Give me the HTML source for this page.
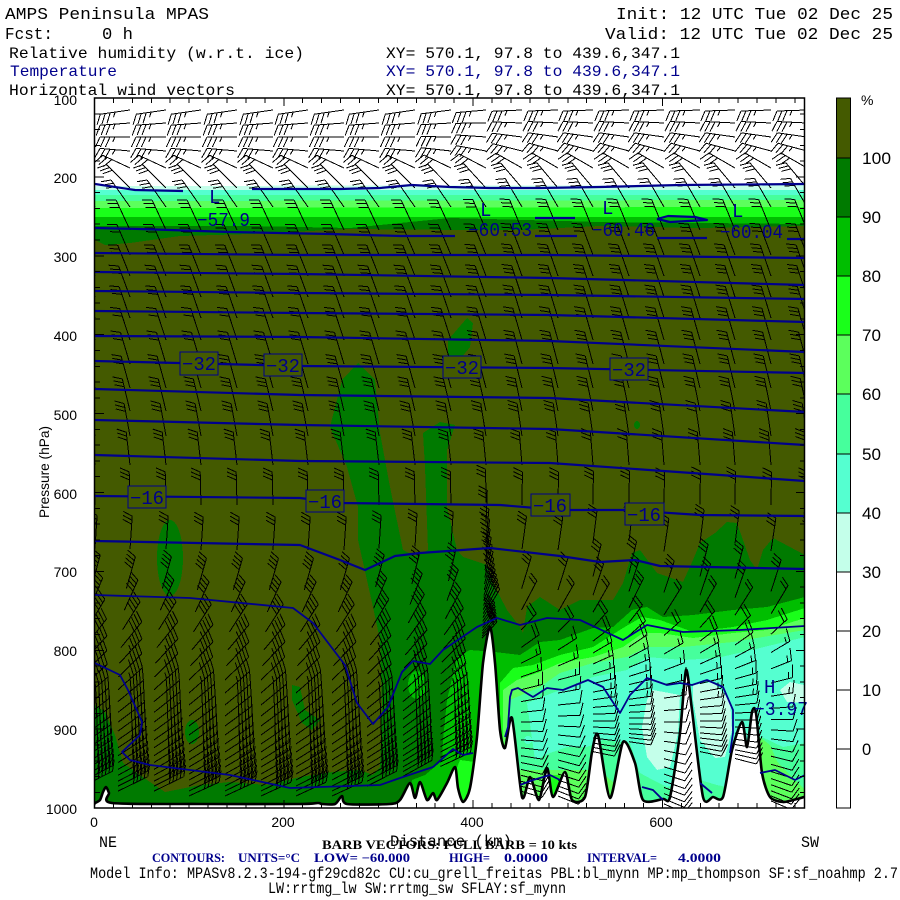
<!DOCTYPE html>
<html lang="en">
<head>
<meta charset="utf-8">
<title>AMPS Peninsula MPAS</title>
<style>
html,body{margin:0;padding:0;background:#fff;width:900px;height:900px;overflow:hidden}
svg{display:block}
text{font-family:"Liberation Sans",sans-serif;fill:#000}
.b{fill:#00008c}
.t1{font-family:"Liberation Mono",monospace;font-size:17px}
.t2{font-family:"Liberation Mono",monospace;font-size:16px}
.ax{font-size:14px}
.cb{font-size:16.5px}
.s{font-family:"Liberation Serif",serif;font-weight:bold;font-size:12.5px}
.c{fill:none;stroke:#00008c;stroke-width:2.2;stroke-linejoin:round}
.c1{fill:none;stroke:#00008c;stroke-width:1.8;stroke-linejoin:round}
.lb{fill:#445a00;stroke:#00008c;stroke-width:1.2}
.ll{font-family:"Liberation Mono",monospace;font-size:19px;fill:#00008c}
.ol{fill:#445a00}.dk{fill:#007a00}.md{fill:#00be00}.br{fill:#1aff1a}.li{fill:#5cff5c}.mi{fill:#46ff9c}.aq{fill:#55ffd0}.pa{fill:#c4ffea}
</style>
</head>
<body>
<svg id="s" xmlns="http://www.w3.org/2000/svg" width="900" height="900" viewBox="0 0 900 900">
<defs><clipPath id="pc"><rect x="95" y="98" width="710" height="710"/></clipPath></defs>
<rect width="900" height="900" fill="#fff"/>
<g clip-path="url(#pc)" shape-rendering="crispEdges">
<rect x="95" y="98" width="710" height="710" class="ol"/>
<!-- upper moisture band -->
<polygon fill="#fff" points="95,98 805,98 805,186 95,186"/>
<polygon class="dk" points="95,186 805,186 805,226 700,228 600,226 520,230 460,230 350,229 250,234 180,236 130,243 105,245 95,240"/>
<polygon class="md" points="95,186 805,186 805,224 600,222 450,218 350,228 250,226 150,226 95,226"/>
<polygon class="br" points="95,186 805,186 805,217 95,217"/>
<polygon class="li" points="95,186 805,186 805,207 95,208"/>
<polygon class="mi" points="95,186 805,186 805,200 95,201"/>
<polygon class="aq" points="95,186 805,186 805,195 95,195"/>
<polygon class="pa" points="95,186 805,185 805,190 95,190"/>
<!-- small patches -->
<polygon class="dk" points="448,340 467,318 473,323 470,347 457,363 448,357"/>
<ellipse class="dk" cx="170" cy="558" rx="13" ry="38"/>
<ellipse class="dk" cx="192" cy="732" rx="7" ry="12"/>
<ellipse class="dk" cx="637" cy="425" rx="3" ry="4"/>
<polygon class="dk" points="292,685 300,687 305,710 320,720 312,730 302,723 292,700"/>
<!-- lower dark region -->
<polygon class="dk" points="95,808 95,705 105,712 115,735 120,753 123,763 150,782 165,792 200,785 230,782 267,785 300,777 333,772 360,770 373,775 380,767 382,707 380,640 373,607 358,540 358,507 347,467 330,427 342,380 358,363 375,380 380,433 390,487 403,550 415,556 428,550 425,467 423,433 440,422 455,425 447,450 447,507 457,550 463,557 487,565 493,583 507,610 520,627 523,633 527,607 540,597 560,610 580,600 613,600 623,583 632,553 640,550 657,573 683,582 693,560 700,543 715,533 727,522 737,523 750,560 757,570 763,550 773,538 805,555 805,808"/>
<ellipse class="md" cx="417" cy="685" rx="9" ry="14"/>
<polygon class="md" points="408,808 412,780 425,775 443,760 443,808"/>
<polygon class="md" points="440,808 443,740 447,700 457,657 470,650 495,652 520,655 540,642 560,640 593,628 613,627 632,610 647,607 663,617 693,615 733,610 767,607 805,597 805,808"/>
<polygon class="br" points="456,808 456,770 460,760 475,762 475,808"/>
<polygon class="br" points="500,808 500,683 513,668 533,665 560,655 593,647 623,628 642,617 660,620 693,632 733,627 767,620 805,608 805,808"/>
<polygon class="li" points="503,808 503,690 517,680 540,672 560,663 593,657 623,647 643,633 660,633 693,638 733,633 767,630 805,618 805,808"/>
<polygon class="mi" points="510,808 510,700 517,697 540,687 560,673 593,663 627,657 647,647 683,647 733,642 805,630 805,790 785,770 762,745 757,808 700,808 640,808 600,770 560,770 530,770 510,770"/>
<polygon class="aq" points="535,760 527,703 560,690 593,677 627,670 647,657 683,660 717,658 760,648 805,637 805,743 783,747 762,737 740,790 717,785 700,780 667,787 653,780 640,773 630,743 603,740 587,747 567,747 550,753"/>
<circle class="aq" cx="528" cy="740" r="4"/>
<polygon class="li" points="757,808 757,735 770,745 783,775 804,790 804,808"/>
<polygon class="br" points="545,808 545,775 560,775 565,808"/>
<polygon class="pa" points="653,690 680,695 678,733 670,767 657,770 647,757 642,727 647,700"/>
<polygon class="pa" points="693,685 713,682 730,700 732,730 725,757 715,758 700,740 693,700"/>
<polygon class="pa" points="780,690 790,682 804,685 804,703 787,702"/>
<!-- terrain -->
<path id="terr" fill="#fff" stroke="#000" stroke-width="2.6" shape-rendering="auto" stroke-linejoin="round"/>
<path id="barbs" fill="none" stroke="#000" stroke-width="1"/>
<!-- contours -->
<g shape-rendering="auto">
<polyline class="c" points="95,184 135,190 183,191"/>
<polyline class="c" points="252,189 340,189 380,188 412,185 450,187 490,188 540,188 600,187 680,185 805,184"/>
<polyline class="c" points="95,228 140,229 230,232 330,234 400,236 455,236"/>
<polyline class="c" points="535,218 575,218"/><polyline class="c" points="535,236 577,236"/>
<polyline class="c" points="657,219 668,216 695,217 707,220 670,222 657,219"/><polyline class="c" points="657,238 707,238"/><polyline class="c" points="787,239 805,239"/>
<polyline class="c" points="95,253 300,255 550,255 805,258"/>
<polyline class="c" points="95,272 300,274 550,278 805,285"/>
<polyline class="c" points="95,291 300,293 550,295 805,299"/>
<polyline class="c" points="95,311 300,313 550,315 805,322"/>
<polyline class="c" points="95,336 300,337 550,341 805,352"/>
<polyline class="c" points="95,361 300,366 550,368 805,373"/>
<polyline class="c" points="95,389 300,395 550,398 805,412"/>
<polyline class="c" points="95,420 300,425 550,429 805,445"/>
<polyline class="c" points="95,455 300,461 550,463 805,481"/>
<polyline class="c" points="95,496 300,498 340,503 500,505 560,510 625,510 700,515 805,516"/>
<polyline class="c" points="95,541 300,545 340,560 365,570 395,556 420,553 490,548 560,556 600,562 635,560 660,566 805,569"/>
<polyline class="c1" points="95,595 190,598 293,608 313,623 345,665 357,703 373,724 388,707 402,672 413,661 430,664 443,650 477,627 497,618 520,625 547,618 580,620 623,640 647,625 683,632 740,630 805,626"/>
<polyline class="c1" points="95,663 120,675 128,690 142,722 140,735 122,752 130,760 150,765 190,770 230,775 290,788 380,785 400,778 433,767 453,749 463,755 473,753"/>
<polyline class="c1" points="505,737 508,727 510,697 512,690 518,688 533,697 547,688 563,690 588,680 603,687 620,713 630,695 647,678 667,685 680,683 692,685 707,680 723,687 733,710 733,733 730,753"/>
<polyline class="c1" points="520,785 533,780 550,775 560,780"/>
<polyline class="c1" points="642,787 653,790 663,800"/>
<polyline class="c1" points="700,783 712,793"/>
<polyline class="c1" points="760,773 775,770 795,780 805,775"/>
</g>
<!-- contour label boxes -->
<g>
<rect class="lb" x="180" y="352" width="38" height="23"/><rect class="lb" x="264" y="354" width="38" height="22"/>
<rect class="lb" x="443" y="356" width="38" height="22"/><rect class="lb" x="610" y="358" width="38" height="22"/>
<rect class="lb" x="128" y="486" width="38" height="22"/><rect class="lb" x="306" y="490" width="38" height="22"/>
<rect class="lb" x="531" y="494" width="39" height="22"/><rect class="lb" x="625" y="503" width="39" height="22"/>
</g>
</g>
<g>
<text class="ll" x="182" y="370" textLength="34">−32</text><text class="ll" x="266" y="372" textLength="34">−32</text>
<text class="ll" x="445" y="374" textLength="34">−32</text><text class="ll" x="612" y="376" textLength="34">−32</text>
<text class="ll" x="130" y="504" textLength="34">−16</text><text class="ll" x="308" y="508" textLength="34">−16</text>
<text class="ll" x="533" y="512" textLength="34">−16</text><text class="ll" x="627" y="521" textLength="34">−16</text>
<text class="ll" x="209" y="203">L</text><text class="ll" x="197" y="226" textLength="53">−57.9</text>
<text class="ll" x="480" y="216">L</text><text class="ll" x="468" y="236" textLength="64">−60.53</text>
<text class="ll" x="602" y="214">L</text><text class="ll" x="592" y="236" textLength="63">−60.46</text>
<text class="ll" x="732" y="217">L</text><text class="ll" x="720" y="238" textLength="63">−60.04</text>
<text class="ll" x="764" y="693">H</text><text class="ll" x="754" y="715" textLength="54">−3.97</text>
</g>
<rect x="94.5" y="98" width="710" height="710" fill="none" stroke="#000" stroke-width="1.5"/>
<path id="ticks" fill="none" stroke="#000" stroke-width="1" shape-rendering="crispEdges"/>
<!-- header -->
<text class="t1" x="5" y="19" textLength="204">AMPS Peninsula MPAS</text>
<text class="t1" x="5" y="39" textLength="48">Fcst:</text><text class="t1" x="102" y="39" textLength="31">0 h</text>
<text class="t1" x="616" y="19" textLength="277">Init: 12 UTC Tue 02 Dec 25</text>
<text class="t1" x="605" y="39" textLength="288">Valid: 12 UTC Tue 02 Dec 25</text>
<text class="t2" x="9" y="58" textLength="295">Relative humidity (w.r.t. ice)</text>
<text class="t2 b" x="10" y="76" textLength="107">Temperature</text>
<text class="t2" x="9" y="95" textLength="226">Horizontal wind vectors</text>
<text class="t2" x="386" y="58" textLength="294">XY= 570.1, 97.8 to 439.6,347.1</text>
<text class="t2 b" x="386" y="76" textLength="294">XY= 570.1, 97.8 to 439.6,347.1</text>
<text class="t2" x="386" y="95" textLength="294">XY= 570.1, 97.8 to 439.6,347.1</text>
<!-- axes -->
<g text-anchor="end">
<text class="ax" x="77" y="105">100</text><text class="ax" x="77" y="183">200</text><text class="ax" x="77" y="262">300</text><text class="ax" x="77" y="341">400</text><text class="ax" x="77" y="420">500</text><text class="ax" x="77" y="499">600</text><text class="ax" x="77" y="577">700</text><text class="ax" x="77" y="656">800</text><text class="ax" x="77" y="735">900</text><text class="ax" x="77" y="814">1000</text>
</g>
<text class="ax" transform="translate(49,518) rotate(-90)" textLength="92">Pressure (hPa)</text>
<g text-anchor="middle">
<text class="ax" x="94" y="827">0</text><text class="ax" x="283" y="827">200</text><text class="ax" x="472" y="827">400</text><text class="ax" x="661" y="827">600</text>
</g>
<text class="t2" x="99" y="847" textLength="18">NE</text><text class="t2" x="801" y="847" textLength="18">SW</text>
<text class="t2" x="390" y="846" textLength="122" fill="#333">Distance (km)</text>
<text class="s" x="322" y="849" textLength="255">BARB VECTORS:  FULL BARB = 10 kts</text>
<g>
<text class="s b" x="152" y="862" textLength="73">CONTOURS:</text>
<text class="s b" x="238" y="862" textLength="62">UNITS=°C</text>
<text class="s b" x="314" y="862" textLength="96">LOW= −60.000</text>
<text class="s b" x="449" y="862" textLength="41">HIGH=</text>
<text class="s b" x="504" y="862" textLength="44">0.0000</text>
<text class="s b" x="587" y="862" textLength="70">INTERVAL=</text>
<text class="s b" x="678" y="862" textLength="43">4.0000</text>
</g>
<text class="t2" x="90" y="878" textLength="808">Model Info: MPASv8.2.3-194-gf29cd82c CU:cu_grell_freitas PBL:bl_mynn MP:mp_thompson SF:sf_noahmp 2.7</text>
<text class="t2" x="268" y="893" textLength="298">LW:rrtmg_lw SW:rrtmg_sw SFLAY:sf_mynn</text>
<!-- colour bar -->
<g shape-rendering="crispEdges" stroke="#000" stroke-width="1.2">
<rect x="836.5" y="98" width="14" height="60" fill="#445a00"/>
<rect x="836.5" y="158" width="14" height="59" fill="#007a00"/>
<rect x="836.5" y="217" width="14" height="59" fill="#00be00"/>
<rect x="836.5" y="276" width="14" height="59" fill="#1aff1a"/>
<rect x="836.5" y="335" width="14" height="59" fill="#5cff5c"/>
<rect x="836.5" y="394" width="14" height="60" fill="#46ff9c"/>
<rect x="836.5" y="454" width="14" height="59" fill="#55ffd0"/>
<rect x="836.5" y="513" width="14" height="59" fill="#c4ffea"/>
<rect x="836.5" y="572" width="14" height="59" fill="#fff"/>
<rect x="836.5" y="631" width="14" height="59" fill="#fff"/>
<rect x="836.5" y="690" width="14" height="59" fill="#fff"/>
<rect x="836.5" y="749" width="14" height="59" fill="#fff"/>
</g>
<text class="ax" x="861" y="105">%</text>
<text class="cb" x="862" y="164" textLength="29">100</text>
<text class="cb" x="862" y="223" textLength="19">90</text><text class="cb" x="862" y="282" textLength="19">80</text><text class="cb" x="862" y="341" textLength="19">70</text><text class="cb" x="862" y="400" textLength="19">60</text><text class="cb" x="862" y="460" textLength="19">50</text><text class="cb" x="862" y="519" textLength="19">40</text><text class="cb" x="862" y="578" textLength="19">30</text><text class="cb" x="862" y="637" textLength="19">20</text><text class="cb" x="862" y="696" textLength="19">10</text><text class="cb" x="862" y="755">0</text>
</svg>
<script>
(function(){
function interp(t,v){if(v<=t[0][0])return t[0][1];for(var i=1;i<t.length;i++){if(v<=t[i][0]){var a=t[i-1],b=t[i];return a[1]+(b[1]-a[1])*(v-a[0])/(b[0]-a[0]);}}return t[t.length-1][1];}
var W=[[110,188],[137,180],[151,175],[168,155],[188,135],[207,125],[230,115],[300,110],[400,105],[500,92],[560,85],[600,70],[630,58],[650,50],[700,40],[760,32],[810,22]];
var E=[[110,182],[137,172],[151,165],[168,150],[188,130],[207,120],[230,112],[300,108],[400,103],[500,90],[560,80],[600,70],[640,38],[680,15],[720,0],[760,-15],[810,-25]];
var L=[110,123,137,151,168,188,207,230,255,276,297,318,340,364,388,411,436,465,505,550,590,612,632,650,666,680,693,705,716,726,735,744,752,760,767,774,780,786,791,796];
var X=[95,130,166,201,237,273,308,344,379,415,451,486,522,558,593,629,664,700,735,771,807];
var S=[790,795,795,800,800,800,800,800,790,780,770,640,795,800,755,745,808,755,762,805,805];
var d="";
function f(n){return n.toFixed(1);}
for(var c=0;c<X.length;c++){
 for(var r=0;r<L.length;r++){
  var y0=L[r],y=y0<=500?y0:500+(y0-500)*(S[c]-500)/300;
  var w=Math.max(0,Math.min(1,(X[c]-440)/90));
  var sh=Math.max(0,Math.min(1,(y-550)/130));
  var x=X[c]-12*sh*(1-w);
  var a=interp(W,y)*(1-w)+interp(E,y)*w;
  var rad=a*Math.PI/180,east=(w>0.5&&y>620),len=east?22:(y<180?30:33);
  var ux=Math.cos(rad),uy=-Math.sin(rad);
  var tx=x+ux*len,ty=y+uy*len;
  d+="M"+f(x)+" "+f(y)+"L"+f(tx)+" "+f(ty);
  var n;
  if(y<160)n=3.5;else if(y<560)n=3;
  else if(w>0.5){n=y<610?3:(y<650?2:(y<700?1.5:1));}
  else n=y<650?4:(y<700?4.5:5);
  var off=east?75:((y>700&&w<=0.5)?55:65);
  var fa=(a+off)*Math.PI/180,fx=Math.cos(fa),fy=-Math.sin(fa);
  var k=0,fl=east?13:(y<180?11:(y>620?12:10)),sp=y<180?5:4;
  for(var q=n;q>0;q-=1){
   var l=q>=1?fl:fl/2;
   var bx=tx-ux*k*sp,by=ty-uy*k*sp;
   d+="M"+f(bx)+" "+f(by)+"L"+f(bx+fx*l)+" "+f(by+fy*l);
   k++;
  }
 }
}
document.getElementById("barbs").setAttribute("d",d);
var T=[[95,803],[100,800],[103,792],[106,787],[109,793],[112,803],[200,804],[300,804],[318,803],[322,804],[335,804],[342,796],[347,804],[390,804],[400,800],[410,783],[415,798],[420,782],[427,800],[433,793],[437,800],[447,783],[455,767],[458,788],[463,802],[470,788],[477,737],[483,663],[490,627],[495,663],[500,730],[505,748],[512,718],[522,797],[530,777],[539,800],[547,768],[553,797],[565,772],[572,800],[585,797],[592,752],[598,735],[610,798],[623,742],[635,763],[643,800],[663,799],[670,797],[680,733],[686,670],[692,710],[703,797],[713,797],[723,797],[732,750],[742,722],[747,747],[752,712],[756,713],[762,773],[770,797],[783,802],[797,799],[804,797]];
var p="M90 812L"+T[0][0]+" "+T[0][1];
for(var i=0;i<T.length-1;i++){
 var p0=T[Math.max(0,i-1)],p1=T[i],p2=T[i+1],p3=T[Math.min(T.length-1,i+2)];
 var c1x=p1[0]+(p2[0]-p0[0])/8,c1y=p1[1]+(p2[1]-p0[1])/8,c2x=p2[0]-(p3[0]-p1[0])/8,c2y=p2[1]-(p3[1]-p1[1])/8;
 p+="C"+f(c1x)+" "+f(c1y)+" "+f(c2x)+" "+f(c2y)+" "+p2[0]+" "+p2[1];
}
p+="L810 797L810 812Z";
document.getElementById("terr").setAttribute("d",p);
var t="",v;
for(i=0;i<=37;i++){v=94.5+18.93*i;if(v>805)break;var m=(i%10==0)?8:5;t+="M"+v+" 98v"+m+"M"+v+" 808v-"+m;}
for(i=0;i<=45;i++){v=98+15.78*i;var h=(i%5==0)?9:5;t+="M95 "+v+"h"+h+"M805 "+v+"h-"+h;}
document.getElementById("ticks").setAttribute("d",t);
var ts=document.querySelectorAll("text[textLength]");
for(i=0;i<ts.length;i++)ts[i].setAttribute("lengthAdjust","spacingAndGlyphs");
})();
</script>
</body>
</html>
